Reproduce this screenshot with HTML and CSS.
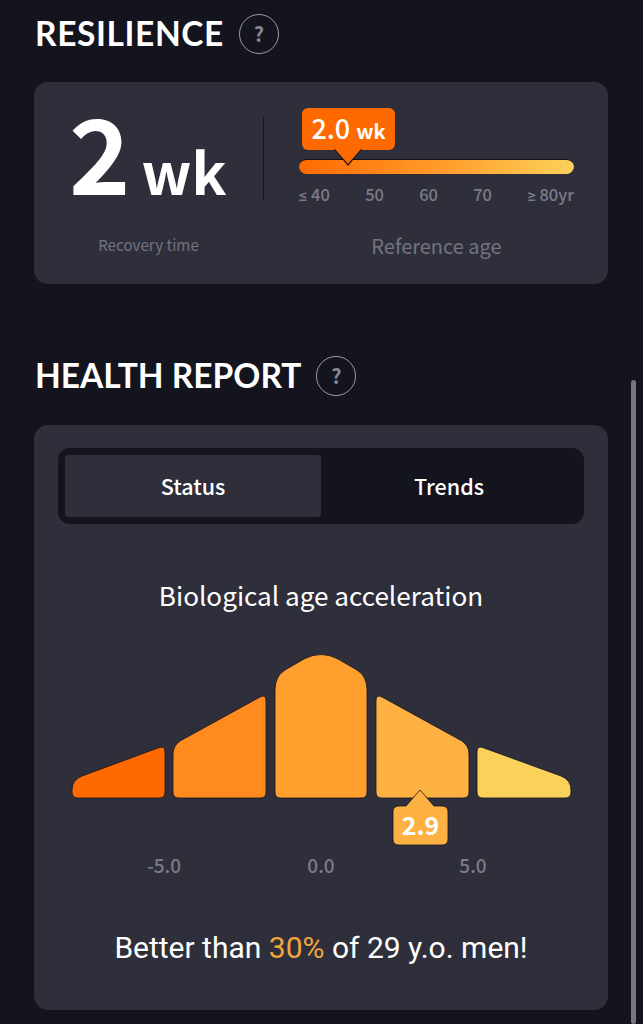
FILE: index.html
```html
<!DOCTYPE html>
<html lang="en">
<head>
    <meta charset="UTF-8">
    <meta name="viewport" content="width=device-width, initial-scale=1.0">
    <title>Health report</title>
    <link rel="stylesheet" href="styles.css">
</head>
<body>
    <div class="page">
        <!-- Resilience -->
        <div class="section-head res-head">
            <h2>RESILIENCE</h2>
            <span class="help">?</span>
        </div>
        <div class="card resilience-card">
            <div class="res-top">
                <div class="res-value"><span class="res-num">2</span><span class="res-unit">wk</span></div>
                <div class="slider">
                    <div class="pin"><span class="pin-num">2.0</span><span class="pin-unit">wk</span></div>
                    <div class="track"></div>
                    <div class="ticks">
                        <span><span class="cmp">≤</span> 40</span>
                        <span>50</span>
                        <span>60</span>
                        <span>70</span>
                        <span><span class="cmp">≥</span> 80yr</span>
                    </div>
                </div>
            </div>
            <div class="res-captions">
                <span class="caption-time">Recovery time</span>
                <span class="caption-age">Reference age</span>
            </div>
        </div>

        <!-- Health report -->
        <div class="section-head report-head">
            <h2>HEALTH REPORT</h2>
            <span class="help">?</span>
        </div>
        <div class="card report-card">
            <div class="tabs">
                <div class="tab active">Status</div>
                <div class="tab">Trends</div>
            </div>
            <h3 class="chart-title">Biological age acceleration</h3>
            <svg class="chart" viewBox="58 640 526 240" width="526" height="240">
                <path fill="#ff6a00" d="M72 790 Q72 780 82 776 L158 748 Q165 745 165 752 V792 Q165 798 159 798 H78 Q72 798 72 792 Z"/>
                <path fill="#ff8a1e" d="M173 754 Q173 746 180 741 L260 697 Q266 694 266 701 V792 Q266 798 260 798 H179 Q173 798 173 792 Z"/>
                <path fill="#ff9f2e" d="M275 690 Q275 676 285 670 L304 659 Q321 650 338 659 L357 670 Q367 676 367 690 V792 Q367 798 361 798 H281 Q275 798 275 792 Z"/>
                <path fill="#fdb142" d="M469 754 Q469 746 462 741 L382 697 Q376 694 376 701 V792 Q376 798 382 798 H463 Q469 798 469 792 Z"/>
                <path fill="#fad25a" d="M571 790 Q571 780 561 776 L484 748 Q477 745 477 752 V792 Q477 798 483 798 H565 Q571 798 571 792 Z"/>
                <path fill="#fdb142" d="M420 790 L434 806 H442 Q448 806 448 812 V839 Q448 845 442 845 H399 Q393 845 393 839 V812 Q393 806 399 806 H406 Z"/>
                <text class="chart-pin" x="420.5" y="835" text-anchor="middle">2.9</text>
                <text class="chart-tick" x="164" y="873" text-anchor="middle">-5.0</text>
                <text class="chart-tick" x="321" y="873" text-anchor="middle">0.0</text>
                <text class="chart-tick" x="473" y="873" text-anchor="middle">5.0</text>
            </svg>
            <p class="summary">Better than <span class="accent">30%</span> of 29 y.o. men!</p>
        </div>
    </div>
    <div class="scrollbar"></div>
</body>
</html>
```

FILE: styles.css
```css
/* Base */
body {
    margin: 0;
    background-color: #14141e;
    color: #fff;
    font-family: "Noto Sans CJK JP", "Noto Sans", sans-serif;
    overflow: hidden;
}

.page {
    height: 1024px;
    padding: 13px 35px 0 34px;
    box-sizing: border-box;
}

/* Section headings */
.section-head {
    display: flex;
    align-items: center;
    gap: 15px;
    height: 41px;
    padding-left: 1px;
}

.section-head h2 {
    margin: 0;
    font-family: Lato, sans-serif;
    font-size: 33.5px;
    font-weight: 700;
    line-height: 39px;
}

.res-head h2 {
    letter-spacing: 0.6px;
}

.report-head {
    margin-top: 71px;
}

.help {
    width: 38px;
    height: 38px;
    border: 1.5px solid #9a9aa2;
    border-radius: 50%;
    color: #8a8a94;
    font-size: 20px;
    font-weight: 700;
    line-height: 38px;
    text-align: center;
}

/* Cards */
.card {
    background-color: #2f2f3b;
    border-radius: 14px;
    box-sizing: border-box;
}

.resilience-card {
    height: 202px;
    margin-top: 28px;
    padding-top: 26px;
}

.report-card {
    height: 585px;
    margin-top: 29px;
    padding: 23px 24px 0;
}

/* Resilience */
.res-top {
    display: flex;
    height: 82px;
    margin-top: 9px;
}

.res-value {
    display: flex;
    align-items: baseline;
    gap: 11px;
    width: 230px;
    height: 82px;
    padding-left: 35px;
    box-sizing: border-box;
    border-right: 1px solid #14141e;
}

.res-num {
    font-size: 104px;
    font-weight: 700;
    line-height: 66px;
}

.res-unit {
    font-size: 58px;
    font-weight: 700;
    line-height: 66px;
}

.slider {
    position: relative;
    width: 275px;
    margin-left: 35px;
    padding-top: 42px;
}

.pin {
    position: absolute;
    left: 3px;
    top: -9px;
    display: flex;
    align-items: baseline;
    justify-content: center;
    gap: 6px;
    width: 93px;
    height: 42px;
    background-color: #ff6a00;
    border-radius: 6px;
    line-height: 40px;
    z-index: 1;
}

.pin::before {
    content: "";
    position: absolute;
    left: 32px;
    top: 41px;
    border-left: 14px solid transparent;
    border-right: 14px solid transparent;
    border-top: 17px solid #14141e;
}

.pin::after {
    content: "";
    position: absolute;
    left: 33px;
    top: 41px;
    border-left: 13px solid transparent;
    border-right: 13px solid transparent;
    border-top: 15px solid #ff6a00;
}

.pin-num {
    font-size: 27px;
    font-weight: 500;
}

.pin-unit {
    font-size: 20px;
    font-weight: 700;
}

.track {
    height: 14px;
    border-top: 1px solid #14141e;
    border-radius: 8px;
    background: linear-gradient(to right, #ff6a00, #ff9f2e 55%, #fad25a);
}

.ticks {
    display: flex;
    justify-content: space-between;
    margin-top: 9px;
    color: #7b7b89;
    font-size: 16.5px;
    font-weight: 500;
    line-height: 22px;
}

.cmp {
    font-family: Roboto, sans-serif;
}

.res-captions {
    display: flex;
    align-items: flex-start;
    margin-top: 34px;
    color: #737381;
}

.caption-time {
    flex: none;
    width: 229px;
    font-size: 15.2px;
    line-height: 22px;
    text-align: center;
}

.caption-age {
    flex: none;
    width: 347px;
    font-size: 20px;
    line-height: 26px;
    text-align: center;
}

/* Health report */
.tabs {
    display: flex;
    height: 76px;
    padding: 7px 0 7px 7px;
    box-sizing: border-box;
    background-color: #14141e;
    border-radius: 12px;
}

.tab {
    width: 256px;
    font-size: 21.5px;
    font-weight: 500;
    line-height: 62px;
    text-align: center;
}

.tab.active {
    background-color: #2f2f3b;
    border-radius: 3px;
}

.chart-title {
    margin: 51px 0 0;
    font-size: 26.1px;
    font-weight: 400;
    line-height: 40px;
    text-align: center;
}

.chart {
    display: block;
    margin-top: 25px;
}

.chart path {
    stroke: #14141e;
    stroke-width: 0.8;
}

.chart-pin {
    fill: #fff;
    font-size: 25px;
    font-weight: 700;
}

.chart-tick {
    fill: #7b7b89;
    font-size: 19px;
    font-weight: 500;
}

.summary {
    margin: 50px 0 0;
    font-family: Roboto, sans-serif;
    font-size: 30px;
    line-height: 36px;
    text-align: center;
}

.accent {
    color: #f0a63c;
}

/* Scrollbar sits over the page */
.scrollbar {
    position: absolute;
    left: 631px;
    top: 380px;
    width: 5px;
    height: 644px;
    background-color: #77777f;
    border-radius: 3px;
}
```
